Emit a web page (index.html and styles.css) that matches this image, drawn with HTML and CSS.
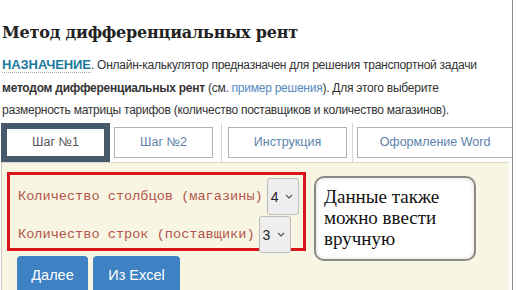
FILE: index.html
```html
<!DOCTYPE html>
<html lang="ru">
<head>
  <meta charset="UTF-8">
  <meta name="viewport" content="width=device-width, initial-scale=1.0">
  <title>Метод дифференциальных рент</title>
  <link rel="stylesheet" href="styles.css">
</head>
<body>
<div class="page">
  <h1 class="title">Метод дифференциальных рент</h1>

  <div class="intro">
    <p><span class="purpose">НАЗНАЧЕНИЕ</span>. Онлайн-калькулятор предназначен для решения транспортной задачи</p>
    <p><b>методом дифференциальных рент</b> (см. <a href="#" class="link">пример решения</a>). Для этого выберите</p>
    <p>размерность матрицы тарифов (количество поставщиков и количество магазинов).</p>
  </div>

  <ul class="tabs">
    <li class="tab tab-1 active"><a href="#">Шаг №1</a></li>
    <li class="tab tab-2"><a href="#">Шаг №2</a></li>
    <li class="tab tab-3"><a href="#">Инструкция</a></li>
    <li class="tab tab-4"><a href="#">Оформление Word</a></li>
  </ul>

  <div class="panel">
    <div class="panel-top">
      <div class="sizes">
        <div class="size-row size-cols">
          <label>Количество столбцов (магазины)</label>
          <span class="select">4
            <svg width="8" height="5" viewBox="0 0 8 5"><path d="M1 1 L4 4 L7 1" fill="none" stroke="#555" stroke-width="1.2"/></svg>
          </span>
        </div>
        <div class="size-row size-rows">
          <label>Количество строк (поставщики)</label>
          <span class="select">3
            <svg width="8" height="5" viewBox="0 0 8 5"><path d="M1 1 L4 4 L7 1" fill="none" stroke="#555" stroke-width="1.2"/></svg>
          </span>
        </div>
      </div>

      <div class="note">Данные также можно ввести вручную</div>
    </div>

    <div class="buttons">
      <button class="btn btn-next">Далее</button>
      <button class="btn btn-excel">Из Excel</button>
    </div>
  </div>
</div>
</body>
</html>
```

FILE: styles.css
```css
* {
    margin: 0;
    padding: 0;
    box-sizing: border-box;
}

body {
    width: 516px;
    height: 290px;
    overflow: hidden;
    background-color: #fff;
    font-family: "Liberation Sans", Arial, sans-serif;
    color: #333;
}

.page {
    width: 513px;
    height: 290px;
    overflow: hidden;
    border-right: 1px solid #8c8c8c;
    padding-top: 23px;
}

.title {
    font-family: "DejaVu Serif", Georgia, serif;
    font-size: 16px;
    font-weight: bold;
    color: #222;
    padding-left: 2px;
    line-height: 20px;
    letter-spacing: -0.2px;
}

.intro {
    padding-left: 2px;
    font-size: 12px;
    letter-spacing: -0.25px;
    line-height: 22.5px;
    margin-top: 11px;
    white-space: nowrap;
}

.purpose {
    color: #1b7b9c;
    font-weight: bold;
    font-size: 13px;
    letter-spacing: -0.1px;
    border-bottom: 1px dotted #9ab;
}

.link {
    color: #5689c0;
    text-decoration: none;
}

/* вкладки */
.tabs {
    list-style: none;
    display: flex;
    height: 39px;
    margin-top: 1px;
    padding-left: 1px;
}

.tab {
    display: flex;
    align-items: center;
    padding-right: 4px;
}

.tab a {
    display: flex;
    align-items: center;
    justify-content: center;
    height: 31px;
    border: 1px solid #a9b4bd;
    background-color: #fff;
    color: #5c82ab;
    font-size: 12.5px;
    text-decoration: none;
}

.tab-1 a { width: 109px; }
.tab-2 a { width: 99px; }
.tab-3 { border-left: 1px solid #d6d6d6; padding-left: 6px; margin-left: 4px; }
.tab-3 a { width: 119px; }
.tab-4 { border-left: 1px solid #d6d6d6; padding-left: 4px; margin-left: 1px; }
.tab-4 a { width: 156px; }

.tab.active {
    align-items: flex-end;
}

.tab.active a {
    height: 39px;
    border: 6px solid #46596b;
    color: #555;
}

/* панель */
.panel {
    height: 130px;
    margin-left: 1px;
    margin-right: 3px;
    background-color: #f8f6e2;
    border-left: 1px solid #c9c9c0;
    border-top: 1px solid #d8d8d0;
    padding: 9px 0 0 5px;
}

.panel-top {
    display: flex;
    align-items: flex-start;
    height: 84px;
}

.sizes {
    width: 299px;
    height: 79px;
    border: 3px solid #d8141c;
    padding-top: 3px;
    padding-left: 8px;
}

.size-row {
    display: flex;
    align-items: center;
    height: 38px;
}

.size-row label {
    font-family: "Liberation Mono", "Courier New", monospace;
    font-size: 13.6px;
    color: #b3554b;
    margin-right: 4px;
}

.select {
    display: flex;
    align-items: center;
    justify-content: space-between;
    width: 32px;
    height: 37px;
    padding: 0 5px 0 3px;
    background-color: #eeeeee;
    border: 1px solid #bcbcbc;
    border-radius: 3px;
    font-size: 14px;
    color: #222;
}

.note {
    position: relative;
    z-index: 1;
    width: 162px;
    height: 85px;
    margin: 4px 0 0 8px;
    padding: 8px 10px 0 8px;
    background-color: #fff;
    border: 2px solid #8a8a84;
    border-radius: 10px;
    box-shadow: inset 0 0 4px rgba(0, 0, 0, 0.15);
    font-family: "Liberation Serif", "Times New Roman", serif;
    font-size: 19px;
    line-height: 21px;
    color: #111;
}

.buttons {
    display: flex;
    gap: 5px;
    padding-left: 10px;
}

.btn {
    height: 38px;
    border: none;
    border-radius: 4px 4px 0 0;
    background-color: #3e82c3;
    color: #fff;
    font-family: "Liberation Sans", Arial, sans-serif;
    font-size: 14.5px;
}

.btn-next { width: 71px; }
.btn-excel { width: 87px; }
```
